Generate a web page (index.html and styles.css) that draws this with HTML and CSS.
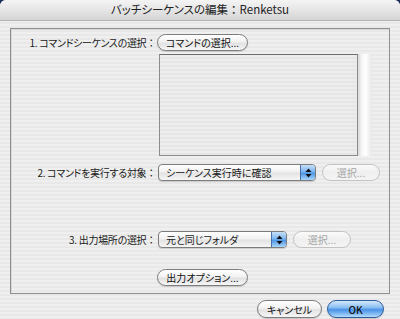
FILE: index.html
```html
<!DOCTYPE html>
<html lang="ja">
<head>
    <meta charset="UTF-8">
    <title>バッチシーケンスの編集</title>
    <link rel="stylesheet" href="styles.css">
</head>
<body>
    <div class="window">
        <div class="titlebar">バッチシーケンスの編集<span class="colon">：</span>Renketsu</div>
        <div class="content">
            <div class="group">
                <div class="row row-first">
                    <span class="label">1. コマンドシーケンスの選択<span class="colon">：</span></span>
                    <button class="btn btn-wide">コマンドの選択...</button>
                </div>
                <div class="list-row">
                    <div class="list"></div>
                    <div class="scroll"></div>
                </div>
                <div class="row row-target">
                    <span class="label">2. コマンドを実行する対象<span class="colon">：</span></span>
                    <div class="popup popup-long">
                        <span class="popup-text">シーケンス実行時に確認</span>
                        <span class="arrows">
                            <svg width="7" height="10" viewBox="0 0 7 10"><path d="M3.5 0.5 L6.5 4 L0.5 4 Z M3.5 9.5 L6.5 6 L0.5 6 Z" fill="#111"/></svg>
                        </span>
                    </div>
                    <button class="btn btn-choose" disabled>選択...</button>
                </div>
                <div class="row row-output">
                    <span class="label">3. 出力場所の選択<span class="colon">：</span></span>
                    <div class="popup popup-short">
                        <span class="popup-text">元と同じフォルダ</span>
                        <span class="arrows">
                            <svg width="7" height="10" viewBox="0 0 7 10"><path d="M3.5 0.5 L6.5 4 L0.5 4 Z M3.5 9.5 L6.5 6 L0.5 6 Z" fill="#111"/></svg>
                        </span>
                    </div>
                    <button class="btn btn-choose" disabled>選択...</button>
                </div>
                <div class="row row-options">
                    <span class="label"></span>
                    <button class="btn btn-wide">出力オプション...</button>
                </div>
            </div>
            <div class="footer">
                <button class="btn btn-cancel">キャンセル</button>
                <button class="btn btn-ok">OK</button>
            </div>
        </div>
    </div>
</body>
</html>
```

FILE: styles.css
```css
html, body {
    margin: 0;
    padding: 0;
    background: #1d2d5e;
}
body {
    font-family: "Noto Sans CJK JP", "Noto Sans", sans-serif;
    font-size: 10px;
    color: #1a1a1a;
}
.window {
    width: 400px;
    height: 319px;
    border-radius: 6px 6px 0 0;
    overflow: hidden;
    background: repeating-linear-gradient(to bottom, #efefef 0, #efefef 2px, #e8e8e8 2px, #e8e8e8 4px);
}
.titlebar {
    height: 20px;
    line-height: 19px;
    text-align: center;
    font-size: 11.5px;
    color: #222;
    font-feature-settings: "palt";
    background: linear-gradient(to bottom, #f4f4f4, #e2e2e2 60%, #d4d4d4);
    border-bottom: 1px solid #b4b4b4;
}
.colon {
    font-feature-settings: normal;
}
.content {
    padding: 7px 16px 0 10px;
}
.group {
    width: 378px;
    height: 259px;
    border: 1px solid #8f8f8f;
    box-shadow: inset 1px 1px 0 #d8d8d8;
    padding-top: 5px;
    box-sizing: content-box;
}
.row {
    display: flex;
    align-items: center;
    height: 17px;
}
.label {
    width: 145px;
    margin-right: 2px;
    text-align: right;
    letter-spacing: -0.3px;
    font-feature-settings: "palt";
    white-space: nowrap;
    flex-shrink: 0;
}
.list-row {
    display: flex;
    margin-top: 3px;
    margin-left: 148px;
    height: 102px;
}
.list {
    width: 197px;
    height: 100px;
    border: 1px solid #8c8c8c;
    border-top-color: #6e6e6e;
    background: repeating-linear-gradient(to bottom, #ededed 0, #ededed 2px, #e6e6e6 2px, #e6e6e6 4px);
}
.scroll {
    width: 13px;
    height: 102px;
    background: linear-gradient(to right, #d8d8d8, #f7f7f7 30%, #ffffff 60%, #e9e9e9);
}
.row-target {
    margin-top: 8px;
}
.row-output {
    margin-top: 50px;
}
.row-options {
    margin-top: 21px;
}
.btn {
    font-family: inherit;
    font-size: 10px;
    font-feature-settings: "palt";
    height: 17px;
    padding: 0;
    border: 1px solid #7d7d7d;
    border-radius: 9px;
    color: #111;
    background: linear-gradient(to bottom, #ffffff, #f2f2f2 45%, #e2e2e2 55%, #f6f6f6);
    box-shadow: 0 1px 1px rgba(0, 0, 0, 0.15);
    line-height: 15px;
}
.btn-wide {
    width: 91px;
    margin-left: -1px;
}
.btn-choose {
    width: 58px;
    margin-left: 6px;
    color: #a5a5a5;
    border-color: #c2c2c2;
    background: linear-gradient(to bottom, #fafafa, #efefef 50%, #f4f4f4);
    box-shadow: none;
}
.popup {
    display: flex;
    align-items: center;
    height: 15px;
    border: 1px solid #7c7c7c;
    border-radius: 4px;
    background: linear-gradient(to bottom, #ffffff, #f1f1f1 45%, #e3e3e3 55%, #f6f6f6);
    box-shadow: 0 1px 1px rgba(0, 0, 0, 0.15);
    overflow: hidden;
}
.popup-long {
    width: 156px;
}
.popup-short {
    width: 127px;
}
.popup-text {
    flex: 1;
    padding-left: 7px;
    font-feature-settings: "palt";
    white-space: nowrap;
}
.arrows {
    width: 14px;
    height: 15px;
    display: flex;
    align-items: center;
    justify-content: center;
    border-left: 1px solid #4a6fa8;
    background: linear-gradient(to bottom, #c5e0fa, #7cb5ef 45%, #4f95e3 55%, #a9d6fb);
}
.footer {
    display: flex;
    justify-content: flex-end;
    gap: 5px;
    margin-top: 6px;
}
.btn-cancel {
    width: 65px;
    height: 18px;
}
.btn-ok {
    width: 57px;
    height: 18px;
    font-weight: 500;
    border-color: #2f5b9c;
    background: linear-gradient(to bottom, #d3e8fb, #8cc0f2 40%, #4b93e6 55%, #7fbaf3 80%, #b7dcfb);
}
```
